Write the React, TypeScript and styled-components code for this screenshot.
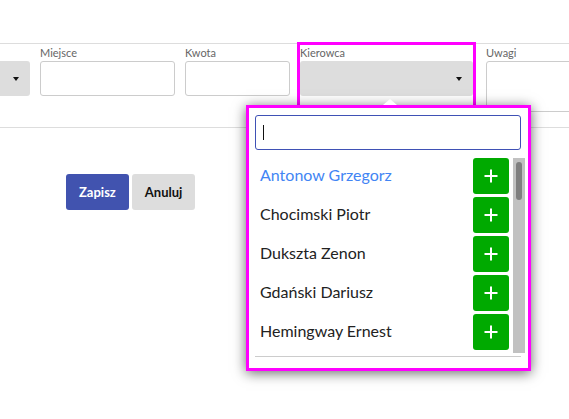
import styled, { createGlobalStyle } from 'styled-components'

const GlobalStyle = createGlobalStyle`
  html, body {
    margin: 0;
    padding: 0;
    background: #fff;
    overflow: hidden;
  }
  body {
    font-family: Lato, "Open Sans", sans-serif;
    color: #222;
  }
`;

const drivers = [
  'Antonow Grzegorz',
  'Chocimski Piotr',
  'Dukszta Zenon',
  'Gdański Dariusz',
  'Hemingway Ernest',
]

const Page = styled.div`
  width: 569px;
  height: 419px;
  padding-top: 43px;
  box-sizing: border-box;
`;

const FormSection = styled.div`
  border-top: 1px solid #ddd;
  border-bottom: 1px solid #ddd;
  height: 82px;
  padding-top: 1px;
  box-sizing: content-box;
`;

const FieldsRow = styled.div`
  display: flex;
  column-gap: 10px;
  margin-left: -70px;
`;

const Field = styled.div<{ $w: number; $active?: boolean }>`
  position: relative;
  width: ${p => p.$w}px;
  flex-shrink: 0;
  display: flex;
  flex-direction: column;

  ${p => p.$active && `
    &::after {
      content: '';
      position: absolute;
      top: -3px;
      left: -3px;
      right: -3px;
      bottom: 0;
      border: 3px solid #ff00ff;
      pointer-events: none;
    }
  `}
`;

const Label = styled.span`
  height: 16px;
  line-height: 16px;
  font-size: 11px;
  color: #666;
`;

const TextBox = styled.div<{ $h?: number }>`
  height: ${p => p.$h ?? 35}px;
  border: 1px solid #ccc;
  border-radius: 3px;
  box-sizing: border-box;
  background: #fff;
`;

const SelectBox = styled.div`
  height: 35px;
  background: #ddd;
  border-radius: 3px;
  display: flex;
  align-items: center;
  justify-content: flex-end;
  padding-right: 11px;
`;

const Arrow = styled.span`
  width: 0;
  height: 0;
  border-left: 3.5px solid transparent;
  border-right: 3.5px solid transparent;
  border-top: 4px solid #111;
  margin-top: 1px;
`;

const Popup = styled.div`
  position: absolute;
  top: 60px;
  left: -54px;
  width: 285px;
  height: 266px;
  box-sizing: border-box;
  border: 3px solid #ff00ff;
  background: #fff;
  box-shadow: 0 2px 12px rgba(0, 0, 0, 0.6);
  padding: 7px 3px 0 6px;
  z-index: 10;
  display: flex;
  flex-direction: column;

  &::before {
    content: '';
    position: absolute;
    top: -9px;
    left: 134px;
    border-left: 7px solid transparent;
    border-right: 7px solid transparent;
    border-bottom: 6px solid #fff;
  }
`;

const Search = styled.div`
  width: 266px;
  height: 35px;
  box-sizing: border-box;
  border: 1px solid #3f51b5;
  border-radius: 3px;
  display: flex;
  align-items: center;
  padding-left: 7px;
`;

const Caret = styled.span`
  width: 1px;
  height: 15px;
  background: #111;
`;

const ListArea = styled.div`
  margin-top: 8px;
  height: 195px;
  display: flex;
`;

const List = styled.div`
  flex: 1;
  overflow: hidden;
  display: flex;
  flex-direction: column;
  row-gap: 3px;
`;

const ScrollTrack = styled.div`
  width: 12px;
  background: #c1c1c1;
  padding: 4px 3px;
  box-sizing: border-box;
`;

const ScrollThumb = styled.div`
  height: 38px;
  border-radius: 3px;
  background: #7f7f7f;
`;

const Row = styled.div`
  flex-shrink: 0;
  height: 36px;
  display: flex;
  align-items: center;
  justify-content: space-between;
  padding: 0 4px 0 5px;
`;

const Name = styled.span<{ $hl?: boolean }>`
  font-size: 16px;
  margin-bottom: 3px;
  color: ${p => (p.$hl ? '#4285f4' : '#222')};
`;

const AddButton = styled.button`
  width: 36px;
  height: 36px;
  border: none;
  border-radius: 3px;
  background: #00aa00;
  display: flex;
  align-items: center;
  justify-content: center;
  padding: 0;
`;

const Divider = styled.div`
  margin-top: 3px;
  width: 266px;
  height: 1px;
  background: #ccc;
`;

const Actions = styled.div`
  display: flex;
  column-gap: 3px;
  padding: 46px 0 0 66px;
`;

const Button = styled.button<{ $primary?: boolean }>`
  height: 36px;
  padding: 0 13px;
  border: none;
  border-radius: 3px;
  font-family: Lato, sans-serif;
  font-weight: bold;
  font-size: 13px;
  background: ${p => (p.$primary ? '#4153af' : '#ddd')};
  color: ${p => (p.$primary ? '#fff' : '#111')};
`;

function PlusIcon() {
  return (
    <svg width="14" height="14" viewBox="0 0 14 14">
      <path d="M7 0.5v13M0.5 7h13" stroke="#fff" strokeWidth="2" />
    </svg>
  )
}

export default function App() {
  return (
    <Page>
      <GlobalStyle />
      <FormSection>
        <FieldsRow>
          <Field $w={100}>
            <Label></Label>
            <SelectBox><Arrow /></SelectBox>
          </Field>
          <Field $w={135}>
            <Label>Miejsce</Label>
            <TextBox />
          </Field>
          <Field $w={105}>
            <Label>Kwota</Label>
            <TextBox />
          </Field>
          <Field $w={173} $active>
            <Label>Kierowca</Label>
            <SelectBox><Arrow /></SelectBox>
            <Popup>
              <Search><Caret /></Search>
              <ListArea>
                <List>
                  {drivers.map((d, i) => (
                    <Row key={d}>
                      <Name $hl={i === 0}>{d}</Name>
                      <AddButton><PlusIcon /></AddButton>
                    </Row>
                  ))}
                </List>
                <ScrollTrack><ScrollThumb /></ScrollTrack>
              </ListArea>
              <Divider />
            </Popup>
          </Field>
          <Field $w={120} style={{ marginLeft: 3 }}>
            <Label>Uwagi</Label>
            <TextBox $h={51} />
          </Field>
        </FieldsRow>
      </FormSection>
      <Actions>
        <Button $primary>Zapisz</Button>
        <Button>Anuluj</Button>
      </Actions>
    </Page>
  )
}
